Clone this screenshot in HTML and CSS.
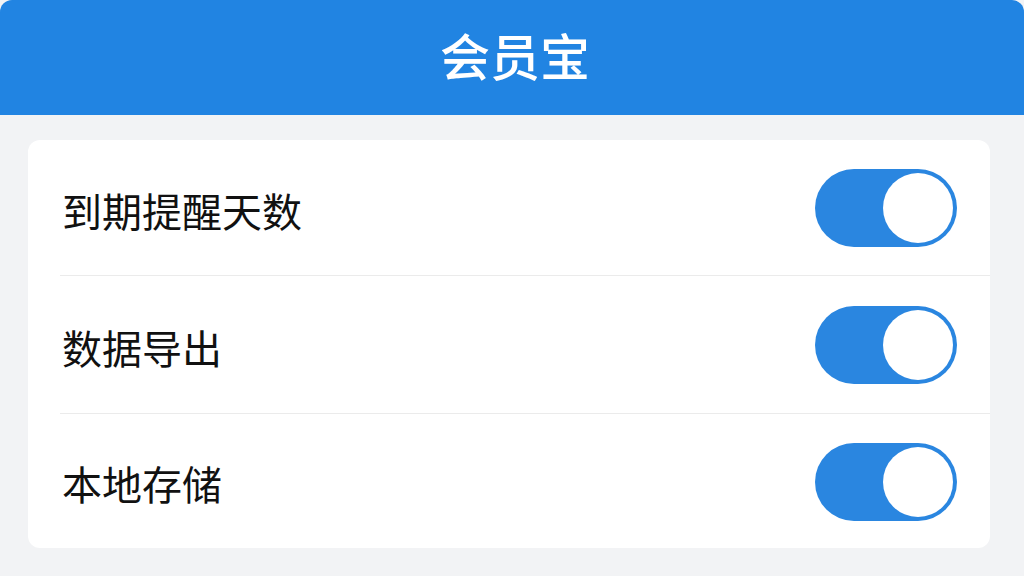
FILE: index.html
```html
<!DOCTYPE html>
<html lang="zh-CN">
<head>
<meta charset="utf-8">
<title>会员宝</title>
<link rel="stylesheet" href="styles.css">
</head>
<body>
<header class="topbar">
	<h1 class="title">会员宝</h1>
</header>
<main class="page">
	<ul class="card">
		<li class="row">
			<span class="label">到期提醒天数</span>
			<span class="switch on"><i class="knob"></i></span>
		</li>
		<li class="row mid">
			<span class="label">数据导出</span>
			<span class="switch on"><i class="knob"></i></span>
		</li>
		<li class="row last">
			<span class="label">本地存储</span>
			<span class="switch on"><i class="knob"></i></span>
		</li>
	</ul>
</main>
</body>
</html>
```

FILE: styles.css
```css
* {margin: 0; padding: 0; box-sizing: border-box;}
li {list-style: none;}

html, body {height: 100%;}
body {
	background: #f2f3f5;
	font-family: "Noto Sans CJK SC", "Noto Sans", sans-serif;
	color: #111;
}

.topbar {
	height: 115px;
	background: #2184e2;
	border-radius: 12px 12px 0 0;
	display: flex;
	align-items: center;
	justify-content: center;
}
.title {
	color: #fff;
	font-size: 50px;
	font-weight: 500;
	margin-top: -8px;
	margin-left: 6px;
}

.page {padding: 25px 34px 0 28px;}

.card {
	background: #fff;
	border-radius: 12px;
}
.row {
	height: 136px;
	margin-left: 32px;
	padding: 0 33px 0 2px;
	display: flex;
	align-items: center;
	justify-content: space-between;
	border-bottom: 1.5px solid #ebebeb;
}
.row.mid {height: 138px;}
.row.last {border-bottom: none; height: 134px;}

.label {
	font-size: 40px;
	line-height: 1;
	margin-top: 4px;
}

.switch {
	width: 142px;
	height: 78px;
	border-radius: 39px;
	background: #2a86e0;
	display: flex;
	align-items: center;
	justify-content: flex-end;
	padding-right: 4px;
	margin-top: 1px;
}
.knob {
	width: 70px;
	height: 70px;
	border-radius: 50%;
	background: #fff;
}
```
